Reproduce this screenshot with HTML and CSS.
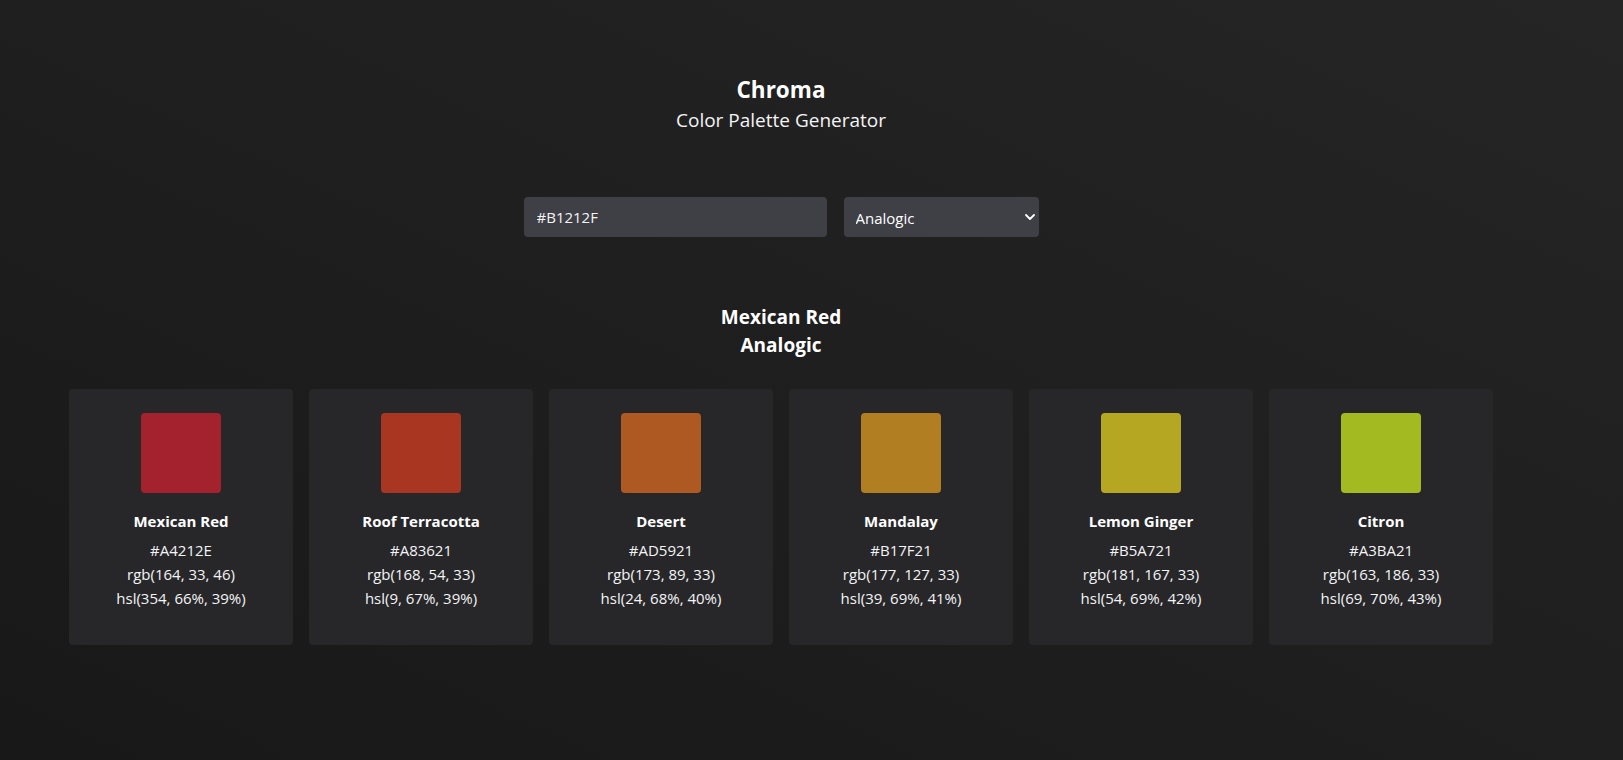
FILE: index.html
```html
<!DOCTYPE html>
<html lang="en">
<head>
<meta charset="utf-8">
<title>Chroma - Color Palette Generator</title>
<link rel="stylesheet" href="styles.css">
</head>
<body>
<div class="app">
  <header class="header">
    <h1 class="title">Chroma</h1>
    <p class="subtitle">Color Palette Generator</p>
  </header>

  <form class="controls">
    <input class="hex-input" type="text" value="#B1212F">
    <div class="select-wrap">
      <select class="mode-select">
        <option selected>Analogic</option>
        <option>Monochrome</option>
        <option>Complement</option>
        <option>Triad</option>
        <option>Quad</option>
      </select>
      <svg class="chevron" width="10" height="6" viewBox="0 0 10 6" aria-hidden="true">
        <path d="M1 1 L5 5 L9 1" fill="none" stroke="#ffffff" stroke-width="1.8" stroke-linecap="round" stroke-linejoin="round"/>
      </svg>
    </div>
  </form>

  <section class="palette-head">
    <h2 class="palette-name">Mexican Red</h2>
    <h2 class="palette-mode">Analogic</h2>
  </section>

  <section class="cards">
    <article class="card">
      <div class="swatch" style="background:#A4212E"></div>
      <h3 class="card-name">Mexican Red</h3>
      <p class="card-line">#A4212E</p>
      <p class="card-line">rgb(164, 33, 46)</p>
      <p class="card-line">hsl(354, 66%, 39%)</p>
    </article>
    <article class="card">
      <div class="swatch" style="background:#A83621"></div>
      <h3 class="card-name">Roof Terracotta</h3>
      <p class="card-line">#A83621</p>
      <p class="card-line">rgb(168, 54, 33)</p>
      <p class="card-line">hsl(9, 67%, 39%)</p>
    </article>
    <article class="card">
      <div class="swatch" style="background:#AD5921"></div>
      <h3 class="card-name">Desert</h3>
      <p class="card-line">#AD5921</p>
      <p class="card-line">rgb(173, 89, 33)</p>
      <p class="card-line">hsl(24, 68%, 40%)</p>
    </article>
    <article class="card">
      <div class="swatch" style="background:#B17F21"></div>
      <h3 class="card-name">Mandalay</h3>
      <p class="card-line">#B17F21</p>
      <p class="card-line">rgb(177, 127, 33)</p>
      <p class="card-line">hsl(39, 69%, 41%)</p>
    </article>
    <article class="card">
      <div class="swatch" style="background:#B5A721"></div>
      <h3 class="card-name">Lemon Ginger</h3>
      <p class="card-line">#B5A721</p>
      <p class="card-line">rgb(181, 167, 33)</p>
      <p class="card-line">hsl(54, 69%, 42%)</p>
    </article>
    <article class="card">
      <div class="swatch" style="background:#A3BA21"></div>
      <h3 class="card-name">Citron</h3>
      <p class="card-line">#A3BA21</p>
      <p class="card-line">rgb(163, 186, 33)</p>
      <p class="card-line">hsl(69, 70%, 43%)</p>
    </article>
  </section>
</div>
</body>
</html>
```
FILE: styles.css
```css
* {
  box-sizing: border-box;
}

html, body {
  margin: 0;
  padding: 0;
}

body {
  min-height: 100vh;
  background: linear-gradient(to bottom left, #252525, #181818);
  color: #fafafa;
  font-family: "Open Sans", "Noto Sans", sans-serif;
}

.app {
  width: 1562px;
  display: flex;
  flex-direction: column;
  align-items: center;
  padding-top: 74px;
  padding-bottom: 40px;
}

.header {
  text-align: center;
}

.title {
  margin: 0;
  font-size: 22.5px;
  line-height: 32px;
  font-weight: 700;
  color: #ffffff;
}

.subtitle {
  margin: 0;
  font-size: 19px;
  line-height: 28px;
  font-weight: 400;
  color: #f4f4f5;
}

.controls {
  margin: 63px 0 0;
  display: flex;
  gap: 17px;
}

.hex-input {
  width: 303px;
  height: 40px;
  border: none;
  outline: none;
  border-radius: 4px;
  background: #3f3f46;
  color: #f4f4f5;
  padding: 0 13px;
  font-family: inherit;
  font-size: 15px;
}

.select-wrap {
  position: relative;
  width: 195px;
  height: 40px;
}

.mode-select {
  appearance: none;
  -webkit-appearance: none;
  width: 100%;
  height: 100%;
  border: none;
  outline: none;
  border-radius: 4px;
  background: #3f3f46;
  color: #ffffff;
  padding: 2px 12px 0;
  font-family: inherit;
  font-size: 15px;
}

.chevron {
  position: absolute;
  right: 4px;
  top: 17px;
  pointer-events: none;
}

.palette-head {
  margin-top: 66px;
  text-align: center;
}

.palette-name,
.palette-mode {
  margin: 0;
  font-size: 19px;
  line-height: 28px;
  font-weight: 700;
  color: #ffffff;
}

.cards {
  margin-top: 30px;
  display: flex;
  justify-content: center;
  gap: 16px;
}

.card {
  width: 224px;
  height: 256px;
  background: #27272a;
  border-radius: 4px;
  padding: 24px 8px 0;
  display: flex;
  flex-direction: column;
  align-items: center;
  text-align: center;
}

.swatch {
  width: 80px;
  height: 80px;
  border-radius: 4px;
  flex-shrink: 0;
}

.card-name {
  margin: 16px 0 5px;
  font-size: 15px;
  line-height: 24px;
  font-weight: 700;
  color: #ffffff;
}

.card-line {
  margin: 0;
  font-size: 15px;
  line-height: 24px;
  color: #f4f4f5;
}
```
